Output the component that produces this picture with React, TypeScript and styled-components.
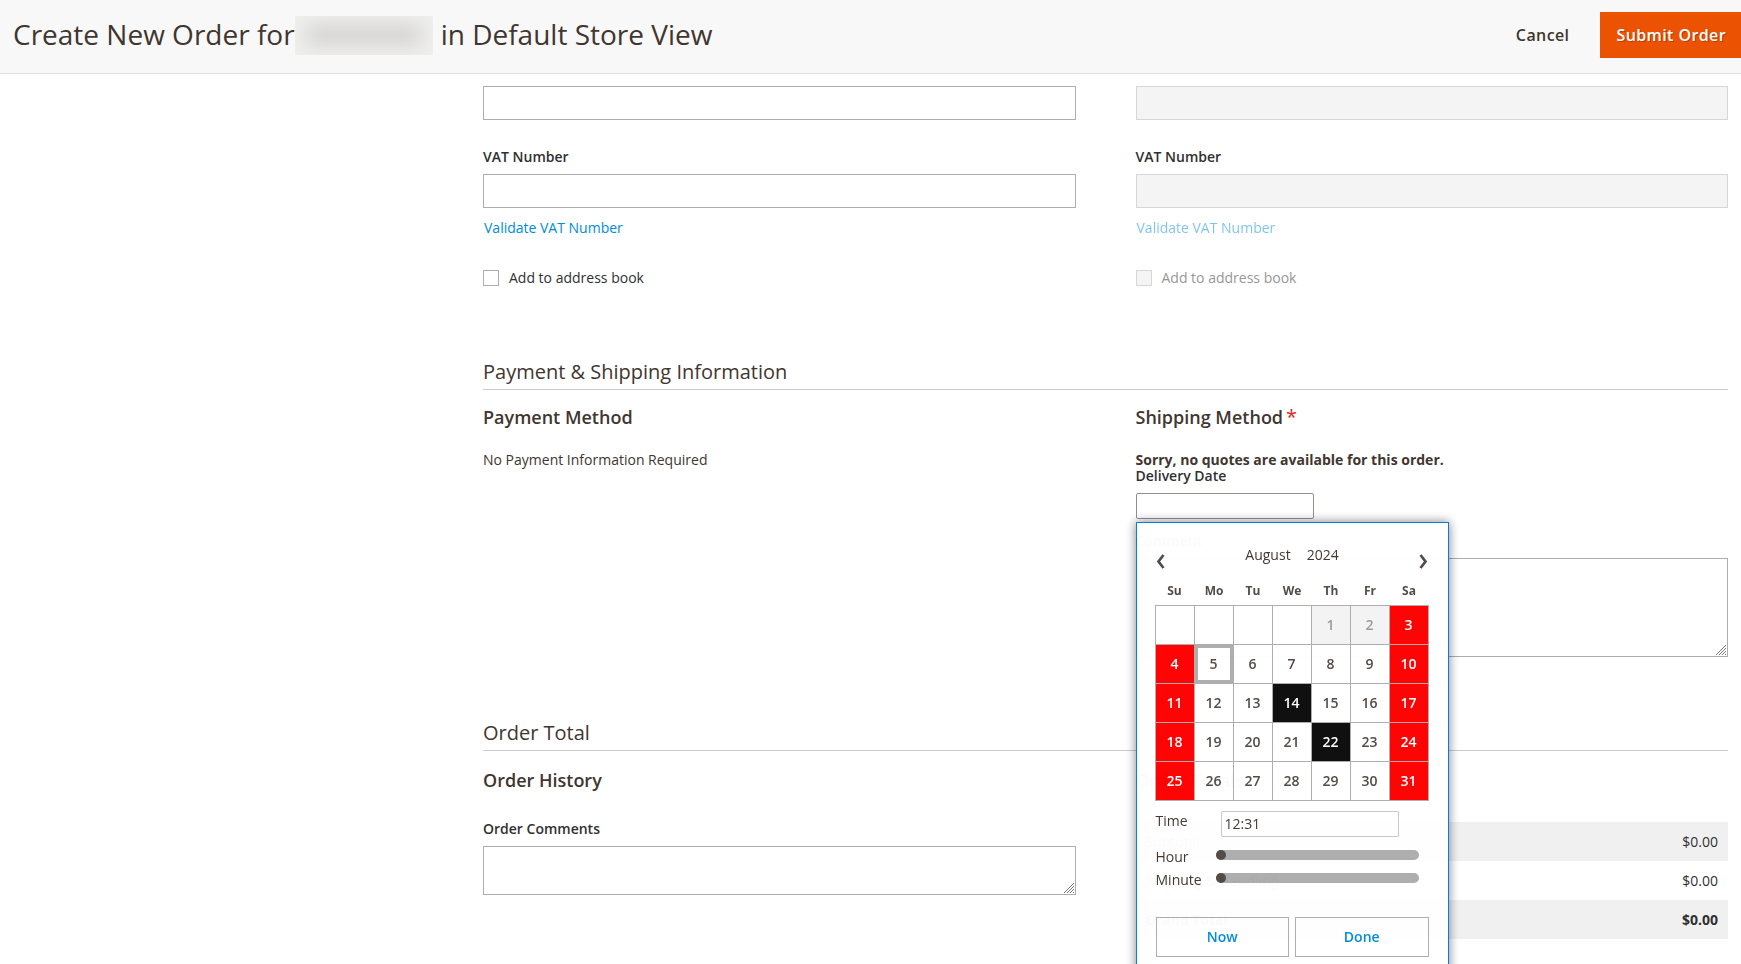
import React, { useId, useState } from "react";
import styled, { createGlobalStyle } from "styled-components";

const GlobalStyle = createGlobalStyle`
  *, *::before, *::after { box-sizing: border-box; }
  body {
    margin: 0;
    background: #fff;
    color: #303030;
    font: 400 14px/20px "Open Sans", "Liberation Sans", sans-serif;
  }
  h1, h2, h3, p { margin: 0; }
  button, input, select, textarea { font: inherit; color: inherit; margin: 0; }
  button { cursor: pointer; }
`;

const Page = styled.div`
  height: 100vh;
  display: flex;
  flex-direction: column;
`;

const Header = styled.header`
  flex: none;
  display: flex;
  align-items: center;
  justify-content: space-between;
  height: 74px;
  padding: 0 0 4px 13px;
  background: #f8f8f8;
  border-bottom: 1px solid #e3e3e3;
`;

const Title = styled.h1`
  display: flex;
  align-items: center;
  padding-bottom: 2px;
  color: #41362f;
  font-size: 28px;
  font-weight: 400;
  line-height: 38px;
  white-space: nowrap;
`;

const HiddenName = styled.span`
  width: 138px;
  height: 39px;
  margin: 4px 8px 0 0;
  overflow: hidden;
  background: #efefee;
  &::before {
    content: "";
    display: block;
    height: 22px;
    margin: 8px 12px;
    background: #d6d5d3;
    filter: blur(9px);
  }
`;

const Actions = styled.div`
  display: flex;
  gap: 16px;
`;

const ActionButton = styled.button<{ $primary?: boolean }>`
  height: 46px;
  padding: 0 15px 0 16px;
  border: 0;
  background: ${(p) => (p.$primary ? "#eb5202" : "transparent")};
  color: ${(p) => (p.$primary ? "#fff" : "#41362f")};
  font-size: 16px;
  font-weight: 600;
  letter-spacing: 0.025em;
  text-shadow: ${(p) => (p.$primary ? "1px 1px 0 rgba(0, 0, 0, 0.25)" : "none")};
`;

const Body = styled.div`
  flex: 1;
  display: flex;
  min-height: 0;
  overflow: hidden;
`;

const Sidebar = styled.aside`
  flex: 0 0 470px;
`;

const Main = styled.main`
  flex: 1;
  min-width: 0;
  padding: 12px 13px 0;
`;

const Columns = styled.div`
  display: grid;
  grid-template-columns: 1fr 1fr;
  column-gap: 60px;
`;

const TextInput = styled.input`
  display: block;
  width: 100%;
  height: 34px;
  padding: 0 10px;
  border: 1px solid #adadad;
  border-radius: 0;
  background: #fff;
  &:disabled {
    border-color: #d6d6d6;
    background: #f4f4f4;
  }
`;

const FieldLabel = styled.label`
  display: block;
  margin-bottom: 7px;
  font-weight: 600;
`;

const VatField = styled.div`
  margin-top: 27px;
`;

const LinkButton = styled.button`
  display: block;
  margin: 9px 0 29px;
  padding: 0;
  border: 1px solid transparent;
  background: none;
  color: #008bdb;
  &:disabled {
    opacity: 0.5;
  }
`;

const CheckRow = styled.label<{ $muted?: boolean }>`
  display: flex;
  align-items: center;
  gap: 10px;
  color: ${(p) => (p.$muted ? "#979797" : "#303030")};
`;

const CheckBox = styled.input`
  appearance: none;
  width: 16px;
  height: 16px;
  border: 1px solid #adadad;
  background: #fff;
  &:disabled {
    border-color: #d6d6d6;
    background: #f4f4f4;
  }
`;

const Section = styled.section<{ $gap: number; $inner: number }>`
  display: grid;
  row-gap: ${(p) => p.$inner}px;
  margin-top: ${(p) => p.$gap}px;
`;

const SectionTitle = styled.h2`
  padding-bottom: 3px;
  border-bottom: 1px solid #ccc;
  color: #41362f;
  font-size: 20px;
  font-weight: 400;
  line-height: 28px;
`;

const Subtitle = styled.h3<{ $gap: number }>`
  height: 24px;
  margin-bottom: ${(p) => p.$gap}px;
  color: #41362f;
  font-size: 18px;
  font-weight: 600;
  line-height: 24px;
`;

const Required = styled.span`
  margin-left: 3px;
  color: #e22626;
  font-size: 20px;
  font-weight: 400;
`;

const Note = styled.p<{ $bold?: boolean }>`
  color: #41362f;
  font-weight: ${(p) => (p.$bold ? 700 : 400)};
  line-height: 16px;
`;

const DateLabel = styled.label`
  display: block;
  margin-bottom: 9px;
  font-weight: 600;
  line-height: 16px;
`;

const DateAnchor = styled.div`
  position: relative;
  margin-bottom: 12px;
`;

const SmallInput = styled.input<{ $faint?: boolean }>`
  display: block;
  width: 178px;
  height: 26px;
  padding: ${(p) => (p.$faint ? "0 3px 2px" : "0 3px")};
  border: 1px solid ${(p) => (p.$faint ? "#c7c7ce" : "#8f8f9d")};
  border-radius: 2px;
  background: #fff;
`;

const AreaWrap = styled.div`
  position: relative;
`;

const Area = styled.textarea<{ $height: number }>`
  display: block;
  width: 100%;
  height: ${(p) => p.$height}px;
  padding: 8px 10px;
  border: 1px solid #adadad;
  border-radius: 0;
  background: #fff;
  resize: none;
`;

const Grip = styled.svg`
  position: absolute;
  right: 2px;
  bottom: 2px;
`;

const Totals = styled.table`
  width: 100%;
  margin-bottom: 15px;
  border-collapse: collapse;
`;

const TotalRow = styled.tr<{ $bold?: boolean }>`
  height: 39px;
  font-weight: ${(p) => (p.$bold ? 700 : 400)};
  &:nth-child(odd) {
    background: #f0f0f0;
  }
  th, td {
    padding: 0 10px;
    font-weight: inherit;
    text-align: left;
  }
  td {
    text-align: right;
  }
`;

const Popup = styled.div`
  position: absolute;
  z-index: 2;
  top: calc(100% + 3px);
  left: 0;
  width: 313px;
  padding: 18px;
  border: 1px solid #007bdb;
  background: #fff;
  box-shadow: 0 0 10px rgba(0, 0, 0, 0.5);
  color: #41362f;
  opacity: 0.98;
`;

const MonthBar = styled.div`
  display: flex;
  align-items: center;
  justify-content: space-between;
  height: 32px;
`;

const MonthSelects = styled.div`
  display: flex;
  gap: 16px;
  margin-bottom: 4px;
`;

const PlainSelect = styled.select`
  appearance: none;
  field-sizing: content;
  height: 20px;
  padding: 0;
  border: 0;
  background: none;
`;

const ArrowButton = styled.button`
  display: flex;
  padding: 8px 0 0;
  margin: 0 1px;
  border: 0;
  background: none;
`;

const Calendar = styled.table`
  width: 274px;
  table-layout: fixed;
  border-collapse: separate;
  border-spacing: 0;
  color: #514943;
  th {
    width: 39px;
    height: 32px;
    padding: 4px 0 0;
    font-size: 12px;
    font-weight: 700;
  }
  th:first-child { width: 40px; }
  tbody td {
    height: 39px;
    padding: 0;
    border: solid #adadad;
    border-width: 0 1px 1px 0;
  }
  tbody td:first-child { border-left-width: 1px; }
  tbody tr:first-child td { height: 40px; border-top-width: 1px; }
`;

type DayKind = "plain" | "past" | "today" | "red" | "black";

const dayBackground: Record<DayKind, string> = {
  plain: "transparent",
  past: "#f3f3f3",
  today: "transparent",
  red: "#f00",
  black: "#0c0c0c",
};

const dayColor: Record<DayKind, string> = {
  plain: "#514943",
  past: "#9c9a98",
  today: "#514943",
  red: "#fff",
  black: "#fff",
};

const Day = styled.button<{ $kind: DayKind }>`
  display: block;
  width: 100%;
  height: 38px;
  padding: 0;
  border: ${(p) => (p.$kind === "today" ? "3px solid #adadad" : "0")};
  background: ${(p) => dayBackground[p.$kind]};
  color: ${(p) => dayColor[p.$kind]};
  font-weight: 600;
`;

const TimeGrid = styled.div`
  display: grid;
  grid-template-columns: 60px 1fr;
  margin: 10px 0 24px;
  padding-left: 1px;
`;

const TimeLabel = styled.label`
  line-height: 20px;
`;

const TimeCell = styled.div`
  height: 36px;
  padding-left: 5px;
`;

const SliderCell = styled.div`
  height: 23px;
  padding-top: 3px;
`;

const Slider = styled.input`
  appearance: none;
  display: block;
  width: 203px;
  height: 10px;
  border-radius: 5px;
  background: #adadad;
  &::-webkit-slider-thumb {
    appearance: none;
    width: 10px;
    height: 10px;
    border-radius: 50%;
    background: #514943;
  }
`;

const PopupButtons = styled.div`
  display: grid;
  grid-template-columns: 1fr 1fr;
  gap: 6px;
  padding: 0 1px;
`;

const PopupButton = styled.button`
  height: 40px;
  padding: 0;
  border: 1px solid #adadad;
  background: transparent;
  color: #008bdb;
  font-weight: 600;
`;

const weekDays = ["Su", "Mo", "Tu", "We", "Th", "Fr", "Sa"];
const months = [
  "January", "February", "March", "April", "May", "June",
  "July", "August", "September", "October", "November", "December",
];
const highlighted = [14, 22];
const today = 5;
// August 2024 starts on a Thursday.
const firstWeekday = 4;

function dayKind(day: number, column: number): DayKind {
  if (column === 0 || column === 6) return "red";
  if (highlighted.includes(day)) return "black";
  if (day === today) return "today";
  return day < today ? "past" : "plain";
}

function Chevron({ flip }: { flip?: boolean }) {
  return (
    <svg width="9" height="15" viewBox="0 0 9 15" aria-hidden="true">
      <path
        d={flip ? "M1.5 1l5 6.5-5 6.5" : "M7.5 1l-5 6.5 5 6.5"}
        fill="none"
        stroke="#514943"
        strokeWidth="2.7"
      />
    </svg>
  );
}

function ResizableArea({ id, height }: { id: string; height: number }) {
  return (
    <AreaWrap>
      <Area id={id} $height={height} />
      <Grip width="10" height="10" viewBox="0 0 10 10" aria-hidden="true">
        <path
          d="M0 10L10 0M3 10l7-7M6 10l4-4M9 10l1-1"
          stroke="#777"
          strokeWidth="1"
          fill="none"
        />
      </Grip>
    </AreaWrap>
  );
}

function AddressColumn({ disabled, kind }: { disabled?: boolean; kind: string }) {
  const id = useId();
  return (
    <div>
      <TextInput aria-label={`${kind} phone number`} disabled={disabled} />
      <VatField>
        <FieldLabel htmlFor={id}>VAT Number</FieldLabel>
        <TextInput id={id} disabled={disabled} />
      </VatField>
      <LinkButton type="button" disabled={disabled}>Validate VAT Number</LinkButton>
      <CheckRow $muted={disabled}>
        <CheckBox type="checkbox" disabled={disabled} />
        Add to address book
      </CheckRow>
    </div>
  );
}

function DatePicker() {
  const [hour, setHour] = useState(0);
  const [minute, setMinute] = useState(0);
  const weeks = [0, 1, 2, 3, 4];
  return (
    <Popup role="dialog" aria-label="Delivery date calendar">
      <MonthBar>
        <ArrowButton type="button" aria-label="Previous month"><Chevron /></ArrowButton>
        <MonthSelects>
          <PlainSelect aria-label="Month" defaultValue="August">
            {months.map((m) => <option key={m}>{m}</option>)}
          </PlainSelect>
          <PlainSelect aria-label="Year" defaultValue="2024">
            {["2023", "2024", "2025"].map((y) => <option key={y}>{y}</option>)}
          </PlainSelect>
        </MonthSelects>
        <ArrowButton type="button" aria-label="Next month"><Chevron flip /></ArrowButton>
      </MonthBar>
      <Calendar>
        <thead>
          <tr>{weekDays.map((d) => <th key={d} scope="col">{d}</th>)}</tr>
        </thead>
        <tbody>
          {weeks.map((week) => (
            <tr key={week}>
              {weekDays.map((name, column) => {
                const day = week * 7 + column - firstWeekday + 1;
                if (day < 1) return <td key={name} />;
                const kind = dayKind(day, column);
                return (
                  <td key={name}>
                    <Day type="button" $kind={kind} disabled={kind === "past"}>{day}</Day>
                  </td>
                );
              })}
            </tr>
          ))}
        </tbody>
      </Calendar>
      <TimeGrid>
        <TimeLabel htmlFor="time">Time</TimeLabel>
        <TimeCell>
          <SmallInput id="time" $faint defaultValue="12:31" />
        </TimeCell>
        <TimeLabel htmlFor="hour">Hour</TimeLabel>
        <SliderCell>
          <Slider id="hour" type="range" min={0} max={23} value={hour}
            onChange={(e) => setHour(Number(e.target.value))} />
        </SliderCell>
        <TimeLabel htmlFor="minute">Minute</TimeLabel>
        <SliderCell>
          <Slider id="minute" type="range" min={0} max={59} value={minute}
            onChange={(e) => setMinute(Number(e.target.value))} />
        </SliderCell>
      </TimeGrid>
      <PopupButtons>
        <PopupButton type="button">Now</PopupButton>
        <PopupButton type="button">Done</PopupButton>
      </PopupButtons>
    </Popup>
  );
}

export default function App() {
  return (
    <Page>
      <GlobalStyle />
      <Header>
        <Title>
          Create New Order for
          <HiddenName aria-hidden="true" />
          in Default Store View
        </Title>
        <Actions>
          <ActionButton type="button">Cancel</ActionButton>
          <ActionButton type="button" $primary>Submit Order</ActionButton>
        </Actions>
      </Header>
      <Body>
        <Sidebar />
        <Main>
          <Columns>
            <AddressColumn kind="Billing" />
            <AddressColumn kind="Shipping" disabled />
          </Columns>

          <Section $gap={70} $inner={15}>
            <SectionTitle>Payment &amp; Shipping Information</SectionTitle>
            <Columns>
              <div>
                <Subtitle $gap={23}>Payment Method</Subtitle>
                <Note>No Payment Information Required</Note>
              </div>
              <div>
                <Subtitle $gap={23}>
                  Shipping Method<Required>*</Required>
                </Subtitle>
                <Note $bold>Sorry, no quotes are available for this order.</Note>
                <DateLabel htmlFor="delivery-date">Delivery Date</DateLabel>
                <DateAnchor>
                  <SmallInput id="delivery-date" />
                  <DatePicker />
                </DateAnchor>
                <FieldLabel htmlFor="comment">Comment</FieldLabel>
                <ResizableArea id="comment" height={99} />
              </div>
            </Columns>
          </Section>

          <Section $gap={62} $inner={17}>
            <SectionTitle>Order Total</SectionTitle>
            <Columns>
              <div>
                <Subtitle $gap={27}>Order History</Subtitle>
                <FieldLabel htmlFor="order-comments">Order Comments</FieldLabel>
                <ResizableArea id="order-comments" height={49} />
              </div>
              <div>
                <Subtitle $gap={30}>Order Totals</Subtitle>
                <Totals>
                  <tbody>
                    <TotalRow><th scope="row">Subtotal</th><td>$0.00</td></TotalRow>
                    <TotalRow><th scope="row">Shipping &amp; Handling</th><td>$0.00</td></TotalRow>
                    <TotalRow $bold><th scope="row">Grand Total</th><td>$0.00</td></TotalRow>
                  </tbody>
                </Totals>
              </div>
            </Columns>
          </Section>
        </Main>
      </Body>
    </Page>
  );
}
